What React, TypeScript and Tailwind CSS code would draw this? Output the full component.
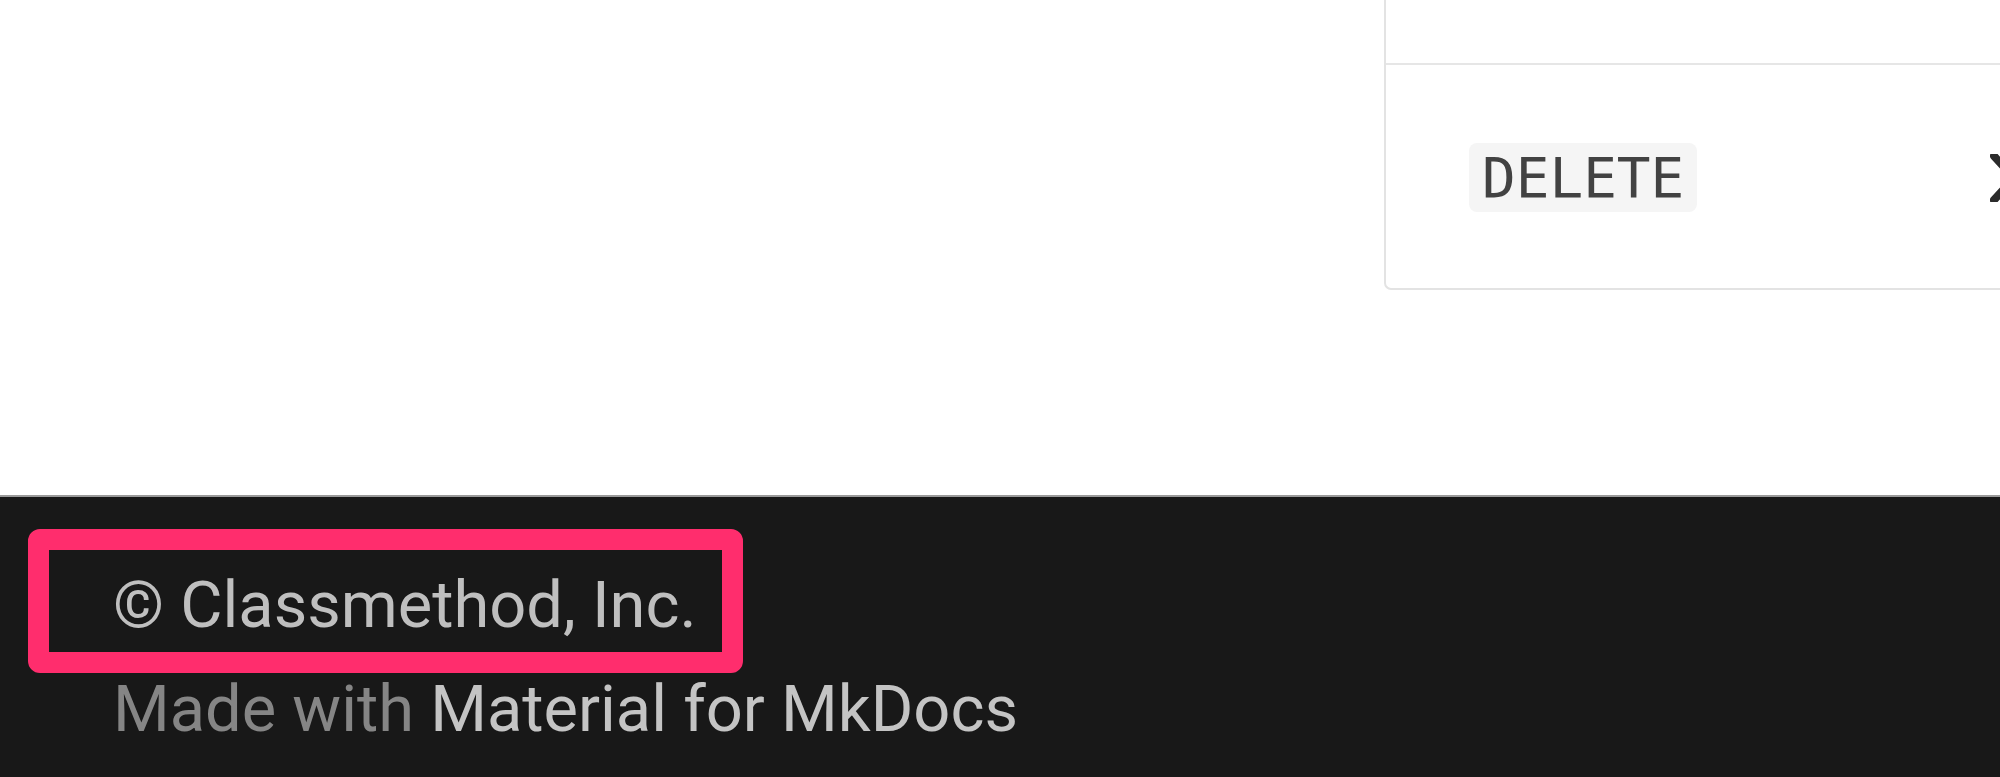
import React from 'react';

// 테이블 일부 + 푸터 (Material for MkDocs 화면 확대 캡처)
const rows = [
  { id: 'prev', method: '', allowed: false, height: 'h-[65px]' },
  { id: 'delete', method: 'DELETE', allowed: false, height: 'h-[225px]' },
];

const Cross: React.FC = () => (
  <svg width="48" height="48" viewBox="0 0 48 48" className="shrink-0">
    <path d="M4 2 L44 46 M4 46 L44 2" stroke="#2b2b2b" strokeWidth="8" strokeLinecap="round" fill="none" />
  </svg>
);

const App: React.FC = () => {
  return (
    <div className="w-[2000px] h-[777px] overflow-hidden bg-white flex flex-col font-['Roboto',sans-serif]">
      {/* 본문 영역 */}
      <div className="h-[495px] shrink-0 overflow-hidden flex pl-[1384px]">
        <div className="w-[700px] h-[290px] shrink-0 border-l-2 border-b-2 border-[#e3e3e3] rounded-bl-[7px] bg-white">
          {rows.map((row, i) => (
            <div
              key={row.id}
              className={`${row.height} flex items-center ${i === 0 ? 'border-b-2 border-[#e6e6e6]' : ''}`}
            >
              {row.method ? (
                <>
                  <div className="w-[521px] shrink-0 pl-[83px] flex items-center">
                    <code className="h-[69px] px-[13px] flex items-center rounded-[8px] bg-[#f5f5f5] text-[#424242] text-[56px] leading-none font-['DejaVu_Sans_Mono',monospace]">
                      {row.method}
                    </code>
                  </div>
                  <div className="pl-[83px] flex items-center">
                    <Cross />
                  </div>
                </>
              ) : null}
            </div>
          ))}
        </div>
      </div>

      {/* 푸터 */}
      <footer className="relative flex-1 bg-[#181818] border-t-2 border-[#9a9a9a] pl-[113px] pt-[56px] text-[65px] leading-[104px]">
        <div className="text-[#bfbfbf]">© Classmethod, Inc.</div>
        <div className="text-[#858585]">
          Made with <span className="text-[#c4c4c4]">Material for MkDocs</span>
        </div>
        {/* 강조 박스 */}
        <div className="absolute left-[28px] top-[32px] w-[715px] h-[144px] border-[21px] border-[#ff2d6d] rounded-[12px]"></div>
      </footer>
    </div>
  );
};

export default App;
